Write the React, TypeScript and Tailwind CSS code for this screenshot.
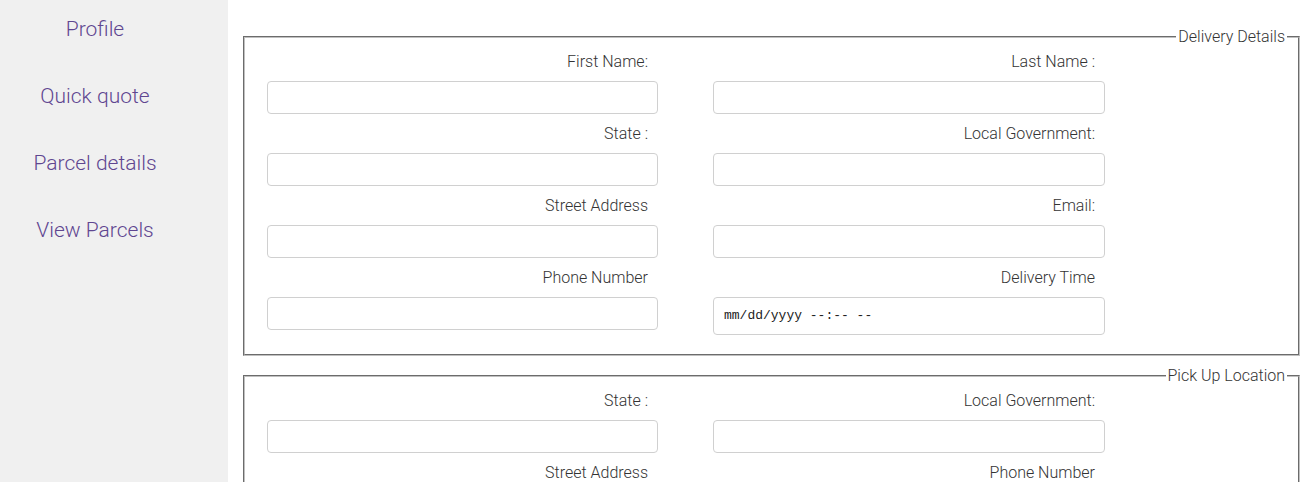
import React from "react";

type Field = { label: string; kind?: "text" | "datetime" };

function FieldBox({ f }: { f: Field }) {
  return (
    <div className="flex flex-col">
      <label className="h-[22px] leading-[24px] text-right pr-[10px] text-[16px] text-[#333]">
        {f.label}
      </label>
      {f.kind === "datetime" ? (
        <div className="mt-[9px] h-[38px] rounded-[4px] border border-[#d0d0d0] bg-white flex items-center pl-[10px] text-[13px] text-[#222] font-['Liberation_Mono',monospace] whitespace-pre">
          mm/dd/yyyy --:-- --
        </div>
      ) : (
        <input
          type="text"
          className="mt-[9px] h-[33px] rounded-[4px] border border-[#d0d0d0] bg-white px-[10px] outline-none"
        />
      )}
    </div>
  );
}

function Section({ legend, fields }: { legend: string; fields: Field[] }) {
  return (
    <fieldset className="border-2 [border-style:groove] border-[#c0c0c0] pl-[22px] pr-[11px] pt-[2px] pb-[19px] w-[1057px]">
      <legend className="ml-auto px-[2px] text-[16px] leading-[22px] text-[#333]">{legend}</legend>
      <div className="grid grid-cols-[391px_392px] gap-x-[55px] gap-y-[8px]">
        {fields.map((f, i) => (
          <FieldBox key={i} f={f} />
        ))}
      </div>
    </fieldset>
  );
}

export default function App() {
  const nav = ["Profile", "Quick quote", "Parcel details", "View Parcels"];
  return (
    <div className="flex min-h-[482px] bg-white font-['Roboto',sans-serif] font-light">
      <aside className="w-[228px] shrink-0 bg-[#f0f0f0]">
        <nav className="w-[190px] flex flex-col items-center pt-[14px] gap-[37px]">
          {nav.map((n) => (
            <a key={n} href="#" className="text-[21px] leading-[30px] text-[#5f4690]">
              {n}
            </a>
          ))}
        </nav>
      </aside>
      <main className="flex-1 pl-[15px] pt-[26px] flex flex-col gap-[9px]">
        <Section
          legend="Delivery Details"
          fields={[
            { label: "First Name:" },
            { label: "Last Name :" },
            { label: "State :" },
            { label: "Local Government:" },
            { label: "Street Address" },
            { label: "Email:" },
            { label: "Phone Number" },
            { label: "Delivery Time", kind: "datetime" },
          ]}
        />
        <Section
          legend="Pick Up Location"
          fields={[
            { label: "State :" },
            { label: "Local Government:" },
            { label: "Street Address" },
            { label: "Phone Number" },
          ]}
        />
      </main>
    </div>
  );
}
